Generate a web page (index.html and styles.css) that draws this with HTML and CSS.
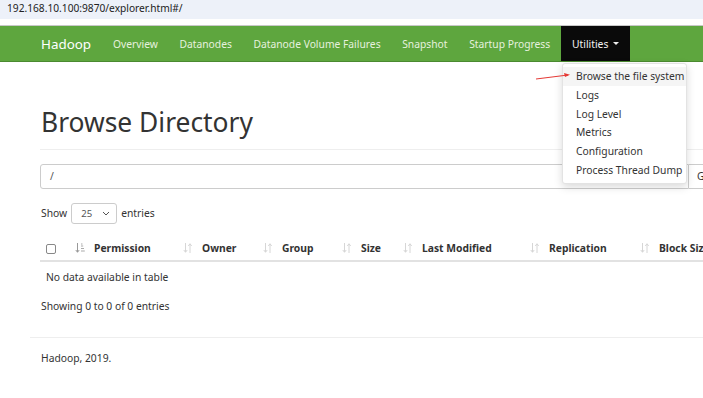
FILE: index.html
```html
<!DOCTYPE html>
<html>
<head>
<meta charset="utf-8">
<link rel="stylesheet" href="styles.css">
</head>
<body>
<div class="addr">192.168.10.100:9870/explorer.html#/</div>
<div class="addr-gap"></div>
<nav class="navbar">
  <div class="brand">Hadoop</div>
  <a class="nav-link">Overview</a>
  <a class="nav-link">Datanodes</a>
  <a class="nav-link">Datanode Volume Failures</a>
  <a class="nav-link">Snapshot</a>
  <a class="nav-link">Startup Progress</a>
  <div class="nav-drop">
    <a class="nav-link active">Utilities <span class="caret"></span></a>
    <ul class="dropdown">
      <li class="hover">Browse the file system</li>
      <li>Logs</li>
      <li>Log Level</li>
      <li>Metrics</li>
      <li>Configuration</li>
      <li>Process Thread Dump</li>
    </ul>
    <svg class="arrow" width="40" height="10" viewBox="0 0 40 10"><path d="M1 8 L33 4" stroke="#e53935" stroke-width="1"/><path d="M29 2 L35 3.8 L30 6 Z" fill="#e53935"/></svg>
  </div>
</nav>
<main class="main">
  <h1 class="title">Browse Directory</h1>
  <div class="search">
    <div class="path-input">/</div>
    <div class="go">Go!</div>
  </div>
  <div class="show">Show <span class="select">25 <svg width="8" height="5" viewBox="0 0 8 5"><path d="M1 1 L4 4 L7 1" fill="none" stroke="#555" stroke-width="1"/></svg></span> entries</div>
  <table class="tbl">
    <colgroup>
      <col class="c-chk"><col class="c-perm"><col class="c-owner"><col class="c-group"><col class="c-size"><col class="c-mod"><col class="c-rep"><col class="c-block">
    </colgroup>
    <thead>
      <tr>
        <th class="chk"><span class="box"></span></th>
        <th><svg class="sort" width="10" height="10" viewBox="0 0 10 10"><path d="M2.5 0 V9 M0.8 7 L2.5 9.3 L4.2 7" fill="none" stroke="#999" stroke-width="1"/><path d="M6 1h1.5M6 3h2.2M6 5.5h3M6 8h3.8" stroke="#aaa" stroke-width="1.2"/></svg>Permission</th>
        <th><svg class="sort" width="10" height="10" viewBox="0 0 10 10"><path d="M2.5 0 V9 M0.8 7 L2.5 9.3 L4.2 7 M7 10 V1 M5.3 3 L7 0.7 L8.7 3" fill="none" stroke="#d6d6d6" stroke-width="1"/></svg>Owner</th>
        <th><svg class="sort" width="10" height="10" viewBox="0 0 10 10"><path d="M2.5 0 V9 M0.8 7 L2.5 9.3 L4.2 7 M7 10 V1 M5.3 3 L7 0.7 L8.7 3" fill="none" stroke="#d6d6d6" stroke-width="1"/></svg>Group</th>
        <th><svg class="sort" width="10" height="10" viewBox="0 0 10 10"><path d="M2.5 0 V9 M0.8 7 L2.5 9.3 L4.2 7 M7 10 V1 M5.3 3 L7 0.7 L8.7 3" fill="none" stroke="#d6d6d6" stroke-width="1"/></svg>Size</th>
        <th><svg class="sort" width="10" height="10" viewBox="0 0 10 10"><path d="M2.5 0 V9 M0.8 7 L2.5 9.3 L4.2 7 M7 10 V1 M5.3 3 L7 0.7 L8.7 3" fill="none" stroke="#d6d6d6" stroke-width="1"/></svg>Last Modified</th>
        <th><svg class="sort" width="10" height="10" viewBox="0 0 10 10"><path d="M2.5 0 V9 M0.8 7 L2.5 9.3 L4.2 7 M7 10 V1 M5.3 3 L7 0.7 L8.7 3" fill="none" stroke="#d6d6d6" stroke-width="1"/></svg>Replication</th>
        <th><svg class="sort" width="10" height="10" viewBox="0 0 10 10"><path d="M2.5 0 V9 M0.8 7 L2.5 9.3 L4.2 7 M7 10 V1 M5.3 3 L7 0.7 L8.7 3" fill="none" stroke="#d6d6d6" stroke-width="1"/></svg>Block Size</th>
      </tr>
    </thead>
    <tbody>
      <tr><td colspan="8" class="empty">No data available in table</td></tr>
    </tbody>
  </table>
  <div class="info">Showing 0 to 0 of 0 entries</div>
</main>
<footer class="footer">
  <div class="foot-text">Hadoop, 2019.</div>
</footer>
</body>
</html>
```
FILE: styles.css
```css
html, body { margin: 0; padding: 0; }
body {
  width: 703px;
  height: 398px;
  overflow: hidden;
  font-family: "Noto Sans", "Open Sans", sans-serif;
  font-size: 10.3px;
  color: #333;
  background: #fff;
}
.addr {
  height: 19px;
  line-height: 17px;
  background: #edf1f9;
  padding-left: 7px;
  font-size: 10.2px;
  color: #222;
}
.addr-gap {
  height: 6px;
  background: #fff;
  border-bottom: 1px solid #c8c8c8;
}
.navbar {
  display: flex;
  align-items: stretch;
  height: 35px;
  background: #5ea63e;
  border-bottom: 1px solid #4b8a30;
  padding-left: 30px;
  white-space: nowrap;
}
.brand {
  display: flex;
  align-items: center;
  padding: 0 11px;
  font-size: 13.4px;
  color: #fff;
}
.nav-link {
  display: flex;
  align-items: center;
  padding: 0 10.8px;
  color: #e6f1df;
  font-size: 10.3px;
}
.nav-drop { position: relative; display: flex; }
.nav-link.active {
  background: #0a0a0a;
  color: #f2f2f2;
  padding: 0 11px;
}
.caret {
  display: inline-block;
  width: 0; height: 0;
  margin-left: 5px;
  border-top: 3px solid #eee;
  border-left: 3px solid transparent;
  border-right: 3px solid transparent;
}
.dropdown {
  position: absolute;
  top: 37px;
  left: 1px;
  width: 123px;
  margin: 0;
  padding: 3px 0;
  list-style: none;
  background: #fff;
  border: 1px solid #e3e3e3;
  border-radius: 3px;
  box-shadow: 0 3px 8px rgba(0,0,0,0.15);
  z-index: 5;
}
.dropdown li {
  height: 18.8px;
  line-height: 18px;
  padding-left: 13px;
  color: #333;
  white-space: nowrap;
}
.dropdown li.hover { background: #f5f5f5; }
.arrow { position: absolute; top: 45px; left: -26px; z-index: 6; }
.main { padding-left: 40px; width: 760px; }
.title {
  margin: 0;
  padding: 40px 0 7px 1px;
  font-size: 26.4px;
  font-weight: 400;
  line-height: 40px;
  border-bottom: 1px solid #eee;
  color: #333;
}
.search {
  display: flex;
  margin-top: 14px;
  height: 25px;
}
.path-input {
  width: 638px;
  border: 1px solid #ccc;
  border-radius: 3px 0 0 3px;
  padding-left: 9px;
  line-height: 23px;
  color: #555;
}
.go {
  border: 1px solid #ccc;
  border-left: none;
  padding-left: 8px;
  line-height: 23px;
  width: 30px;
}
.show {
  display: flex;
  align-items: center;
  margin-top: 13px;
  padding-left: 1px;
  height: 22px;
}
.select {
  display: inline-flex;
  align-items: center;
  justify-content: space-between;
  box-sizing: border-box;
  width: 46px;
  height: 21px;
  margin: 0 4px;
  padding: 0 6px 0 9px;
  border: 1px solid #ccc;
  border-radius: 3px;
  font-size: 9.6px;
  color: #555;
}
.tbl {
  margin-top: 11px;
  border-collapse: collapse;
  table-layout: fixed;
  width: 720px;
}
.c-chk { width: 30px; }
.c-perm { width: 108px; }
.c-owner { width: 80px; }
.c-group { width: 79px; }
.c-size { width: 61px; }
.c-mod { width: 127px; }
.c-rep { width: 110px; }
.c-block { width: 125px; }
.tbl th {
  text-align: left;
  font-weight: 700;
  height: 25px;
  padding: 0 0 0 5px;
  border-bottom: 2px solid #e2e2e2;
  white-space: nowrap;
  overflow: hidden;
  color: #333;
}
.tbl th.chk { padding-left: 6px; }
.box {
  display: inline-block;
  width: 8px; height: 8px;
  border: 1px solid #888;
  border-radius: 2px;
  vertical-align: middle;
}
.sort {
  margin-right: 9px;
  vertical-align: -1px;
}
.empty { padding: 8px 6px 6px; height: 14px; }
.info { margin-top: 9px; padding-left: 1px; }
.footer {
  margin: 24px 0 0 30px;
  border-top: 1px solid #eee;
  padding: 13px 0 0 11px;
}
```
